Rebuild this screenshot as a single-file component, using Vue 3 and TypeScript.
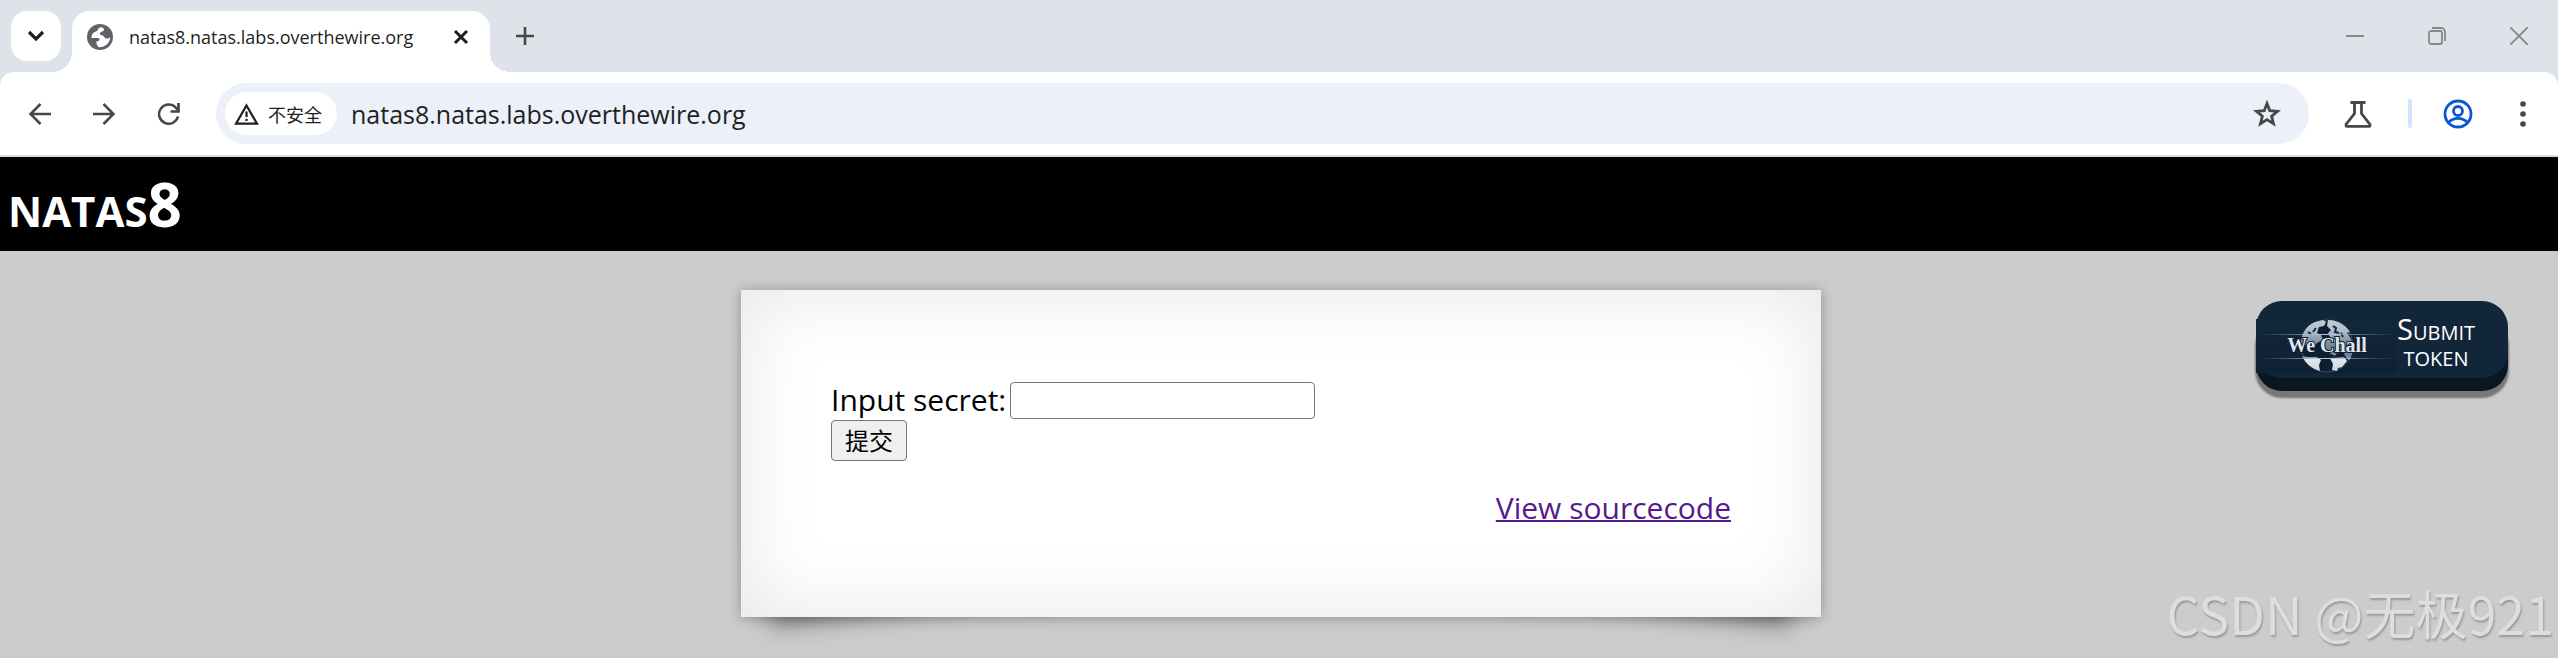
<script setup lang="ts">
import { ref } from 'vue'

const host = 'natas8.natas.labs.overthewire.org'
const address = ref(host)
const secret = ref('')
</script>

<template>
  <div class="window">
    <header class="tabstrip">
      <button class="search-tabs" aria-label="Search tabs">
        <svg width="18" height="18" viewBox="0 0 18 18"><path d="M2 5l7 7 7-7" fill="none" stroke="#1f1f1f" stroke-width="3.2" /></svg>
      </button>
      <div class="tab">
        <svg class="favicon" width="26" height="26" viewBox="0 0 26 26">
          <circle cx="13" cy="13" r="13" fill="#5f6368" />
          <path d="M14 3.200c-4 .800-2 3-5 4.300-1.500 1-3.500 1-4 3.500-.800 2-1 3 .500 3h5.500c2.500 0 2 3.200-.500 3.200H9.500v2.800l2 3.200C18 23.500 23 19 23.300 13c-1.300 1.500-3 1.800-4.800 1.200-1.500-.700-1.500-2.700-3.500-2.900-2.500-.300-3-1.800-1.300-3 1.300-1 3.300-.800 3.300-2.600 0-1.500-1.300-2.500-3-2.500z" fill="#fff" />
        </svg>
        <span class="title">{{ host }}</span>
        <button class="close-tab" aria-label="Close tab">
          <svg width="16" height="16" viewBox="0 0 16 16"><path d="M2 2l12 12M14 2L2 14" stroke="#1f1f1f" stroke-width="3" /></svg>
        </button>
      </div>
      <button class="new-tab" aria-label="New tab">
        <svg width="18" height="18" viewBox="0 0 18 18"><path d="M9 0v18M0 9h18" stroke="#474747" stroke-width="2.6" /></svg>
      </button>
      <div class="controls">
        <button aria-label="Minimize"><svg width="18" height="18" viewBox="0 0 18 18"><path d="M0 9h18" stroke="#85888c" stroke-width="2" /></svg></button>
        <button aria-label="Restore">
          <svg width="18" height="18" viewBox="0 0 18 18" fill="none" stroke="#85888c" stroke-width="1.8"><rect x="1" y="4" width="13" height="13" rx="2" /><path d="M4 1h9a4 4 0 0 1 4 4v9" /></svg>
        </button>
        <button aria-label="Close"><svg width="18" height="18" viewBox="0 0 18 18"><path d="M0 0l18 18M18 0L0 18" stroke="#85888c" stroke-width="1.8" /></svg></button>
      </div>
    </header>

    <nav class="toolbar">
      <button class="nav" aria-label="Back">
        <svg width="24" height="24" viewBox="0 0 24 24"><path d="M23 12H3M12.5 2L2.500 12l10 10" fill="none" stroke="#474747" stroke-width="2.500" /></svg>
      </button>
      <button class="nav" aria-label="Forward">
        <svg width="24" height="24" viewBox="0 0 24 24"><path d="M1 12h20M11.500 2l10 10-10 10" fill="none" stroke="#474747" stroke-width="2.500" /></svg>
      </button>
      <button class="nav" aria-label="Reload">
        <svg width="24" height="24" viewBox="0 0 24 24"><path d="M22 14.500A9.600 9.600 0 1 1 19.500 5.300l2.500 3" fill="none" stroke="#474747" stroke-width="2.500" /><path d="M22.500 1v8.500H14.500" fill="none" stroke="#474747" stroke-width="2.700" /></svg>
      </button>
      <div class="omnibox">
        <button class="chip">
          <svg width="25" height="22" viewBox="0 0 25 22"><path d="M12.500 2.500L23 20.700H2z" fill="none" stroke="#1f1f1f" stroke-width="2.200" /><path d="M12.500 8.500v5.500M12.500 15.700v2.300" stroke="#1f1f1f" stroke-width="2.200" /></svg>
          <span>不安全</span>
        </button>
        <input v-model="address" class="address" type="text" aria-label="Address" />
        <button class="star" aria-label="Bookmark">
          <svg width="28" height="28" viewBox="0 0 28 28"><path d="M14 3.500l2.800 7.200 7.700.6-5.900 4.900 1.900 7.500L14 19.600l-6.500 4.100 1.900-7.500-5.900-4.900 7.700-.6z" fill="none" stroke="#474747" stroke-width="2.800" /></svg>
        </button>
      </div>
      <button class="action" aria-label="Labs">
        <svg width="28" height="28" viewBox="0 0 28 28"><path d="M6.500 2.500h15M10.500 2.500v11L2 24.500v1q0 .800.800.800h22.400q.800 0 .800-.800v-1l-8.500-11v-11" fill="none" stroke="#474747" stroke-width="2.800" /></svg>
      </button>
      <span class="divider"></span>
      <button class="action profile" aria-label="Profile">
        <svg width="30" height="30" viewBox="0 0 30 30" fill="none" stroke="#0b57d0" stroke-width="2.800"><circle cx="15" cy="15" r="13" /><circle cx="15" cy="12" r="4.500" /><path d="M5.500 23.500c5-5.500 14-5.500 19 0" /></svg>
      </button>
      <button class="menu" aria-label="Menu">
        <svg width="8" height="28" viewBox="0 0 8 28" fill="#474747"><circle cx="4" cy="4" r="2.800" /><circle cx="4" cy="14" r="2.800" /><circle cx="4" cy="24" r="2.800" /></svg>
      </button>
    </nav>

    <h1 class="level">natas8</h1>

    <main class="page">
      <section class="panel">
        <form @submit.prevent>
          <div class="field">
            <label for="secret">Input secret:</label>
            <input id="secret" v-model="secret" type="text" />
          </div>
          <button class="submit" type="submit">提交</button>
        </form>
        <a class="source" href="#">View sourcecode</a>
      </section>

      <button class="wechall">
        <svg class="logo" width="140" height="54" viewBox="0 0 140 54">
          <defs>
            <linearGradient id="streak"><stop offset="0" stop-color="#5d83a8" stop-opacity="0" /><stop offset=".5" stop-color="#b9d0e4" /><stop offset="1" stop-color="#5d83a8" stop-opacity="0" /></linearGradient>
            <linearGradient id="land" gradientUnits="userSpaceOnUse" x1="0" y1="0" x2="0" y2="54"><stop offset="0" stop-color="#c3ccd6" /><stop offset=".2" stop-color="#b3bfcb" /><stop offset=".5" stop-color="#71869c" /><stop offset=".7" stop-color="#71869c" /><stop offset=".75" stop-color="#e2e7ec" /><stop offset="1" stop-color="#c9d2db" /></linearGradient>
            <linearGradient id="plate" x1="0" y1="0" x2="0" y2="1"><stop offset="0" stop-color="#14283b" /><stop offset="1" stop-color="#0e2033" /></linearGradient>
          </defs>
          <rect width="140" height="54" fill="url(#plate)" />
          <circle cx="71" cy="27" r="26" fill="#0e1f31" stroke="#3c5268" stroke-width="1" />
          <path d="M59 3l8-2 3 2-2 4-5 1-2 6 4 2 2 5-6 3-4 5-7-3-5 2c-1-11 4-21 14-25z" fill="url(#land)" />
          <path d="M72 1c10 0 18 5 22 12l-3 1 4 6 2 7c0 6-1 10-4 14l-4-4-2-6-5 1-3 5-6-3-5-7 2-6 4-3-2-4 3-3-4-4z" fill="url(#land)" />
          <path d="M46 37l6 1 9 0 4 3-2 5 1 6c-8-2-15-8-18-15zM74 39l14-1 3 4-5 6-4 1-1 3-5-1 1-6z" fill="url(#land)" />
          <path d="M77 7l3 2-1 4 4 1M85 14l2 4M60 9l-3 4M52 13l3 2" stroke="#14283b" stroke-width="2" fill="none" />
          <rect y="15" width="140" height="1" fill="url(#streak)" /><rect y="39" width="140" height="1" fill="url(#streak)" />
          <text x="71" y="33" text-anchor="middle" class="brand">We Chall</text>
        </svg>
        <span class="token">Submit token</span>
      </button>

      <p class="watermark">CSDN @无极921</p>
    </main>
  </div>
</template>

<style>
body { margin: 0; }
</style>

<style scoped>
* { box-sizing: border-box; }
.window {
  display: flex;
  flex-direction: column;
  min-height: 100vh;
  font-family: "Open Sans", "Noto Sans CJK SC", sans-serif;
  background: #dee2e9;
}
button { font: inherit; padding: 0; border: 0; background: none; display: flex; align-items: center; justify-content: center; cursor: pointer; }
svg { display: block; flex: none; }

.tabstrip { display: flex; height: 72px; padding: 11px 8px 0 11px; }
.search-tabs { width: 50px; height: 50px; border-radius: 16px; background: #fff; }
.tab {
  position: relative;
  display: flex;
  align-items: center;
  width: 418px;
  height: 61px;
  margin-left: 11px;
  padding: 0 19px 10px 15px;
  border-radius: 18px 18px 0 0;
  background: #fff;
}
.tab::before, .tab::after { content: ""; position: absolute; bottom: 0; width: 20px; height: 20px; }
.tab::before { left: -20px; background: radial-gradient(circle at 0 0, transparent 20px, #fff 20px); }
.tab::after { right: -20px; background: radial-gradient(circle at 100% 0, transparent 20px, #fff 20px); }
.title { flex: 1; margin-left: 16px; font-size: 18px; line-height: 24px; color: #1f1f1f; white-space: nowrap; }
.close-tab { width: 20px; height: 20px; }
.new-tab { width: 50px; height: 50px; margin-left: 10px; }
.controls { display: flex; height: 50px; margin-left: auto; }
.controls button { width: 82px; }
.controls button:last-child { width: 62px; margin-left: 10px; }

.toolbar {
  display: flex;
  align-items: center;
  height: 85px;
  padding: 0 20px 0 16px;
  border-bottom: 2px solid #dcdcdc;
  background: #fff;
  border-radius: 14px 14px 0 0;
}
.nav { width: 48px; height: 48px; margin-right: 16px; }
.omnibox { display: flex; flex: 1; align-items: center; height: 61px; margin: 0 1px 0 8px; padding: 0 28px 0 9px; border-radius: 31px; background: #ecf0f9; }
.chip { gap: 9px; height: 43px; padding: 0 15px 0 9px; border-radius: 22px; background: #fff; font-size: 18px; color: #1f1f1f; }
.address { flex: 1; min-width: 0; margin-left: 14px; padding: 0; border: 0; outline: 0; background: none; font: inherit; font-size: 25px; color: #1f1f1f; }
.action { width: 48px; height: 48px; margin-left: 24px; }
.divider { width: 4px; height: 29px; margin-left: 26px; border-radius: 2px; background: #d3e3fd; }
.profile { margin-left: 22px; }
.menu { width: 30px; height: 48px; margin-left: 26px; }

.level { margin: 0; padding: 0 8px; height: 94px; background: #000; color: #fff; font-size: 60px; line-height: 94px; font-weight: 700; font-variant: small-caps; }

.page { position: relative; z-index: 0; flex: 1; padding: 39px 0 24px 4px; background: #ccc; }
.panel {
  position: relative;
  max-width: 1080px;
  margin: 0 auto;
  padding: 90px;
  font-size: 30px;
  line-height: 38px;
  background: #fff;
  box-shadow: 0 1px 12px rgba(0, 0, 0, .3), inset 0 0 80px rgba(0, 0, 0, .1);
}
.panel::before, .panel::after {
  content: "";
  position: absolute;
  z-index: -1;
  bottom: 26px;
  width: 30%;
  height: 20%;
  box-shadow: 0 16px 24px rgba(0, 0, 0, .5);
}
.panel::before { left: 24px; transform: rotate(-6deg); }
.panel::after { right: 24px; transform: rotate(6deg); }
.field { display: flex; align-items: center; gap: 4px; height: 40px; }
.field input { width: 305px; height: 37px; padding: 2px 4px; border: 1px solid #767676; border-radius: 4px; font: inherit; font-size: 24px; }
.submit { width: 76px; height: 41px; border: 1px solid #767676; border-radius: 4px; background: #efefef; font-size: 24px; color: #000; }
.source { display: block; width: fit-content; margin: 28px 0 0 auto; color: #551a8b; text-decoration-thickness: 2px; }

.wechall {
  position: absolute;
  top: 50px;
  right: 50px;
  width: 252px;
  height: 77px;
  justify-content: flex-start;
  border-radius: 26px;
  background: #12263a;
  color: #fff;
  box-shadow: 0 13px 0 #0a1722, 0 19px 2px 1px #777;
}
.logo { margin-top: 12px; }
.brand { font: 700 20px "Liberation Serif", serif; fill: #dfe6ee; stroke: #0d1b2b; stroke-width: 2px; paint-order: stroke; }
.token { width: 80px; padding-top: 4px; font-size: 29px; line-height: 26px; font-variant: small-caps; text-align: center; }

.watermark {
  position: absolute;
  right: 4px;
  bottom: 15px;
  margin: 0;
  font-family: "Noto Sans CJK SC", sans-serif;
  font-size: 52px;
  line-height: 60px;
  color: #dedede;
  text-shadow: 1px 2px 2px #999;
}
</style>
